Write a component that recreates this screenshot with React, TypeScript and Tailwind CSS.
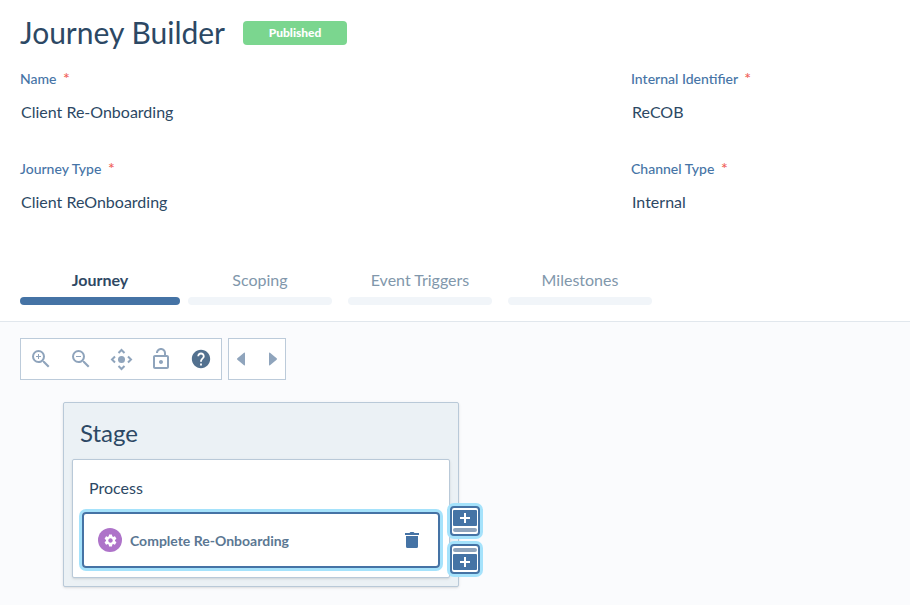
import React from "react";
import {
  MdHelp,
  MdOutlineLockOpen,
  MdSettings,
  MdZoomIn,
  MdZoomOut,
} from "react-icons/md";

function Field({ id, label, value }: { id: string; label: string; value: string }) {
  return (
    <div className="flex h-[90px] min-w-0 flex-col">
      <label htmlFor={id} className="text-[14px] leading-5 font-medium text-[#4674a6]">
        {label} <span className="ml-[3px] text-[16px] leading-none text-[#f0625a]">*</span>
      </label>
      <input
        id={id}
        readOnly
        defaultValue={value}
        className="mt-1.5 h-8 w-full border border-transparent bg-transparent text-[16px] text-[#2c4864] outline-none"
      />
    </div>
  );
}

function Tab({ label, active = false }: { label: string; active?: boolean }) {
  return (
    <button
      role="tab"
      aria-selected={active}
      className={
        active
          ? "flex w-40 flex-col text-[16px] leading-6 font-bold text-[#2f4864]"
          : "flex w-36 flex-col text-[16px] leading-6 text-[#8197ab]"
      }
    >
      <span className="w-full text-center">{label}</span>
      <span
        className={
          active
            ? "mt-[5px] h-2 w-full rounded-full bg-[#4573a5]"
            : "mt-[5px] h-2 w-full rounded-full bg-[#f1f5f9]"
        }
      />
    </button>
  );
}

function ToolButton({ label, children }: { label: string; children: React.ReactNode }) {
  return (
    <button aria-label={label} className="flex h-10 w-10 items-center justify-center text-[#8fa4bc]">
      {children}
    </button>
  );
}

function AddButton({ label, below = false }: { label: string; below?: boolean }) {
  return (
    <button
      aria-label={label}
      className="flex h-[30px] w-[30px] items-center justify-center rounded-[4px] border-2 border-[#4573a5] bg-white ring-[3px] ring-[#a5e2fb]"
    >
      <svg width="24" height="22" viewBox="0 0 24 22">
        <rect x="0" y={below ? 0 : 18} width="24" height="4" rx="2" fill="#8fa4bc" />
        <g transform={below ? "translate(0 6)" : undefined}>
          <rect width="24" height="16" rx="1" fill="#4573a5" />
          <path d="M12 3v10M7 8h10" stroke="#fff" strokeWidth="2" />
        </g>
      </svg>
    </button>
  );
}

export default function App() {
  return (
    <div className="flex min-h-screen flex-col bg-white font-[Lato,sans-serif] text-[#2c4864]">
      <header className="flex items-center gap-[18px] px-5 pt-3">
        <h1 className="pb-0.5 text-[30px] leading-10 text-[#2c4864]">Journey Builder</h1>
        <span className="flex h-6 w-[104px] items-center justify-center rounded-[4px] bg-[#7bd68f] text-[12px] font-black text-white">
          Published
        </span>
      </header>

      <form className="grid grid-cols-[611px_1fr] px-5 pt-[15px]">
        <Field id="name" label="Name" value="Client Re-Onboarding" />
        <Field id="identifier" label="Internal Identifier" value="ReCOB" />
        <Field id="journey-type" label="Journey Type" value="Client ReOnboarding" />
        <Field id="channel-type" label="Channel Type" value="Internal" />
      </form>

      <nav role="tablist" className="flex px-5 pt-[19px] pb-4">
        <div className="mr-2">
          <Tab label="Journey" active />
        </div>
        <div className="flex gap-4">
          <Tab label="Scoping" />
          <Tab label="Event Triggers" />
          <Tab label="Milestones" />
        </div>
      </nav>

      <main className="flex-1 border-t border-[#e1e7ed] bg-[#fafbfd] px-5 pt-4">
        <div className="flex gap-1.5">
          <div className="flex border border-[#bccbda] bg-white">
            <ToolButton label="Zoom in">
              <MdZoomIn size={24} />
            </ToolButton>
            <ToolButton label="Zoom out">
              <MdZoomOut size={24} />
            </ToolButton>
            <ToolButton label="Fit to view">
              <svg width="24" height="24" viewBox="0 0 24 24" fill="none" stroke="currentColor" strokeWidth="2">
                <circle cx="12.5" cy="12.5" r="3.5" fill="currentColor" stroke="none" />
                <path d="M9.5 6l3-3 3 3M9.5 19l3 3 3-3M6 9.5l-3 3 3 3M19 9.5l3 3-3 3" />
              </svg>
            </ToolButton>
            <ToolButton label="Unlock">
              <MdOutlineLockOpen size={24} />
            </ToolButton>
            <ToolButton label="Help">
              <MdHelp size={22} className="text-[#53718f]" />
            </ToolButton>
          </div>
          <div className="flex w-[58px] items-center justify-between border border-[#bccbda] bg-white px-2">
            <button aria-label="Previous">
              <svg width="8" height="14" viewBox="0 0 8 14" fill="#8fa4bc">
                <path d="M8 1.5Q8 0 7 .8L.4 6.3Q-.3 7 .4 7.700L7 13.2Q8 14 8 12.5z" />
              </svg>
            </button>
            <button aria-label="Next">
              <svg width="8" height="14" viewBox="0 0 8 14" fill="#8fa4bc">
                <path d="M0 1.5Q0 0 1 .8l6.6 5.5q.7.7 0 1.4L1 13.2Q0 14 0 12.5z" />
              </svg>
            </button>
          </div>
        </div>

        <section className="relative mt-[22px] mb-4 ml-[43px] w-[396px] rounded-[2px] border border-[#b9c9d8] bg-[#ebf1f5] px-2 pb-2 shadow-sm">
          <h2 className="px-2 pt-3.5 pb-2.5 text-[24px] leading-8">Stage</h2>
          <div className="rounded-[2px] border border-[#b9c9d8] bg-white px-[9px] pb-[9px] shadow-sm">
            <h3 className="px-[7px] pt-4 pb-3 text-[16px] leading-6">Process</h3>
            <div className="flex h-14 items-center rounded-[4px] border-2 border-[#4573a5] px-3.5 ring-[3px] ring-[#a5e2fb]">
              <span className="flex h-6 w-6 items-center justify-center rounded-full bg-[#ae73c9] text-white">
                <MdSettings size={15} />
              </span>
              <span className="ml-2 flex-1 text-[14px] font-bold text-[#5b7793]">
                Complete Re-Onboarding
              </span>
              <button aria-label="Delete process" className="text-[#4573a5]">
                <svg width="24" height="24" viewBox="0 0 24 24" fill="currentColor">
                  <path d="M6 8v10.5Q6 20 7.5 20h9q1.5 0 1.5-1.5V8zM5 5h4.5l1-1h3l1 1H19v2H5z" />
                </svg>
              </button>
            </div>
          </div>
          <div className="absolute top-[103px] left-[386px] flex flex-col gap-2">
            <AddButton label="Add process above" />
            <AddButton label="Add process below" below />
          </div>
        </section>
      </main>
    </div>
  );
}
